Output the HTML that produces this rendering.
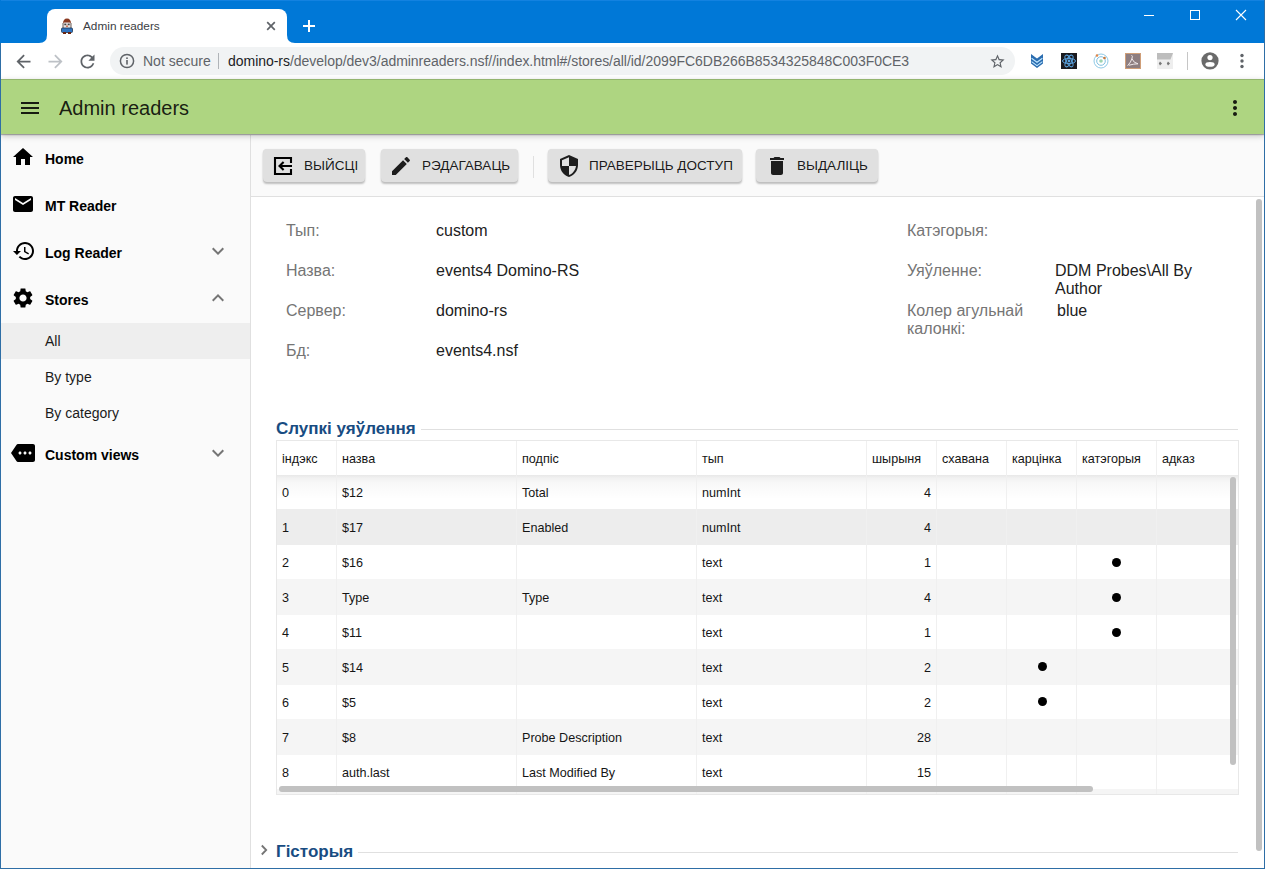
<!DOCTYPE html>
<html><head><meta charset="utf-8">
<style>
*{box-sizing:border-box;margin:0;padding:0}
html,body{width:1265px;height:869px;overflow:hidden;background:#fff;font-family:"Liberation Sans",sans-serif}
.a{position:absolute}
svg{display:block}
/* chrome */
#titlebar{left:0;top:0;width:1265px;height:43px;background:#0078d7}
#tab{left:47px;top:9px;width:240px;height:34px;background:#fff;border-radius:8px 8px 0 0}
#toolbar{left:1px;top:43px;width:1263px;height:36px;background:#fff}
#omni{left:110px;top:47px;width:905px;height:28px;background:#f1f3f4;border-radius:14px}
#appbar{left:1px;top:79px;width:1263px;height:55px;background:#aed581;box-shadow:0 1px 1px rgba(0,0,0,.28),0 2px 6px rgba(0,0,0,.22);z-index:3}
#sidebar{left:1px;top:135px;width:250px;height:734px;background:#fafafa;border-right:1px solid #e0e0e0}
#actbar{left:251px;top:135px;width:1013px;height:62px;background:#fafafa;border-bottom:1px solid #e0e0e0}
#content{left:251px;top:197px;width:1013px;height:672px;background:#fff}
.btn{position:absolute;top:149px;height:33px;background:#e0e0e0;border-radius:4px;box-shadow:0 2px 2px rgba(0,0,0,.24),0 0 1px rgba(0,0,0,.12);font-size:13.5px;color:rgba(0,0,0,.9);white-space:nowrap}
.btn svg{position:absolute;top:5px}
.btn span{position:absolute;top:9px;line-height:16px}
.nav{position:absolute;left:45px;font-size:14px;font-weight:bold;color:#000;white-space:nowrap}
.sub{position:absolute;left:45px;font-size:14px;color:#1a1a1a;white-space:nowrap}
.lbl{position:absolute;font-size:16px;color:#757575;white-space:nowrap;line-height:18px}
.val{position:absolute;font-size:16px;color:#212121;white-space:nowrap;line-height:18px}
.sect{position:absolute;font-size:17px;font-weight:bold;color:#184c82;white-space:nowrap}
.td{position:absolute;font-size:12.6px;color:#151515;white-space:nowrap;line-height:15px}
</style></head>
<body>
<div id="titlebar" class="a"></div>
<div id="tab" class="a"></div>
<div id="toolbar" class="a"></div>
<div id="omni" class="a"></div>
<div id="appbar" class="a"></div>
<div class="a" style="left:1px;top:79px;width:1263px;height:1px;background:rgba(60,70,50,.22);z-index:4"></div>
<div id="sidebar" class="a"></div>
<div id="actbar" class="a"></div>
<div id="content" class="a"></div>


<!-- tab details -->
<svg class="a" style="left:39px;top:35px;z-index:2" width="8" height="8"><path d="M0 8 Q8 8 8 0 V8 Z" fill="#fff"/></svg>
<svg class="a" style="left:287px;top:35px;z-index:2" width="8" height="8"><path d="M0 0 Q0 8 8 8 H0 Z" fill="#fff"/></svg>
<svg class="a" style="left:61px;top:18px;z-index:2" width="12" height="16" viewBox="0 0 12 16">
 <path d="M2 6 Q2 0.5 6 0.5 Q10 0.5 10 6 Z" fill="#8a3a22"/>
 <path d="M1.5 5 h9 v5 h-9z" fill="#6b5a55"/>
 <rect x="2.5" y="4.5" width="7" height="6" rx="1" fill="#e9e4e4"/>
 <rect x="3.3" y="5.6" width="2" height="1.6" fill="#444"/><rect x="6.7" y="5.6" width="2" height="1.6" fill="#444"/>
 <path d="M5.2 7.5 h1.6 v1.6 h-1.6z" fill="#c8603a"/>
 <rect x="0.5" y="10" width="11" height="4.5" rx="1" fill="#2f74c0" stroke="#1d3550" stroke-width="0.8"/>
 <rect x="2" y="14" width="3" height="2" fill="#6a2410"/><rect x="7" y="14" width="3" height="2" fill="#6a2410"/>
</svg>
<div class="a" style="left:83px;top:19px;font-size:11.8px;color:#3c4043;white-space:nowrap;line-height:14px;z-index:2">Admin readers</div>
<svg class="a" style="left:266px;top:21px;z-index:2" width="10" height="10" viewBox="0 0 10 10"><path d="M1.2 1.2 L8.8 8.8 M8.8 1.2 L1.2 8.8" stroke="#5f6368" stroke-width="1.7"/></svg>
<svg class="a" style="left:302px;top:19px;z-index:2" width="14" height="14" viewBox="0 0 14 14"><path d="M7 1 V13 M1 7 H13" stroke="#fff" stroke-width="2"/></svg>
<!-- window controls -->
<div class="a" style="left:1144px;top:15px;width:10px;height:1px;background:#fff"></div>
<div class="a" style="left:1190px;top:10px;width:10px;height:10px;border:1px solid #fff"></div>
<svg class="a" style="left:1235px;top:9px" width="12" height="12" viewBox="0 0 12 12"><path d="M1 1 L11 11 M11 1 L1 11" stroke="#fff" stroke-width="1.1"/></svg>
<div class="a" style="left:1px;top:0;width:1263px;height:1px;background:#1382e0"></div>
<!-- nav buttons -->
<svg class="a" style="left:12.5px;top:50.5px" width="21" height="21" viewBox="0 0 24 24"><path d="M20 11H7.83l5.59-5.59L12 4l-8 8 8 8 1.41-1.41L7.83 13H20v-2z" fill="#5f6368"/></svg>
<svg class="a" style="left:44.5px;top:50.5px" width="21" height="21" viewBox="0 0 24 24"><path d="M12 4l-1.41 1.41L16.17 11H4v2h12.17l-5.58 5.59L12 20l8-8z" fill="#bdc1c6"/></svg>
<svg class="a" style="left:76.5px;top:50.5px" width="21" height="21" viewBox="0 0 24 24"><path d="M17.65 6.35C16.2 4.9 14.21 4 12 4c-4.42 0-7.99 3.58-7.99 8s3.57 8 7.99 8c3.73 0 6.84-2.55 7.73-6h-2.08c-.82 2.33-3.04 4-5.65 4-3.31 0-6-2.69-6-6s2.69-6 6-6c1.66 0 3.14.69 4.22 1.78L13 11h7V4l-2.35 2.35z" fill="#5f6368"/></svg>
<svg class="a" style="left:119px;top:53px" width="16" height="16" viewBox="0 0 16 16"><circle cx="8" cy="8" r="6.6" fill="none" stroke="#5f6368" stroke-width="1.5"/><rect x="7.2" y="7" width="1.6" height="4.6" fill="#5f6368"/><rect x="7.2" y="4.4" width="1.6" height="1.6" fill="#5f6368"/></svg>
<div class="a" style="left:143px;top:53px;font-size:14px;color:#5f6368;white-space:nowrap;line-height:16px">Not secure</div>
<div class="a" style="left:218px;top:53px;width:1px;height:16px;background:#b0b4b8"></div>
<div class="a" style="left:228px;top:53px;font-size:14px;color:#5f6368;white-space:nowrap;line-height:16px;letter-spacing:-0.03px"><span style="color:#202124">domino-rs</span>/develop/dev3/adminreaders.nsf//index.html#/stores/all/id/2099FC6DB266B8534325848C003F0CE3</div>
<svg class="a" style="left:988.5px;top:52.5px" width="17" height="17" viewBox="0 0 24 24"><path d="M22 9.24l-7.19-.62L12 2 9.19 8.63 2 9.24l5.46 4.73L5.82 21 12 17.27 18.18 21l-1.63-7.03L22 9.24zM12 15.4l-3.76 2.27 1-4.28-3.32-2.88 4.38-.38L12 6.1l1.71 4.04 4.38.38-3.32 2.88 1 4.28L12 15.4z" fill="#5f6368"/></svg>
<!-- extensions -->
<svg class="a" style="left:1031px;top:54px" width="12" height="14" viewBox="0 0 12 14"><path d="M0 0 L6 4.6 L12 0 V9.6 L6 14 L0 9.6Z" fill="#2b6db0"/><path d="M0.6 4.2 L6 8.2 L11.4 4.2 M0.6 7.6 L6 11.6 L11.4 7.6" fill="none" stroke="#bfe6ff" stroke-width="1.1"/></svg>
<svg class="a" style="left:1061px;top:53px" width="16" height="16" viewBox="0 0 16 16"><rect width="16" height="16" fill="#1b1b1f"/><g fill="none" stroke="#5ba3e0" stroke-width="1"><ellipse cx="8" cy="8" rx="6.5" ry="2.6"/><ellipse cx="8" cy="8" rx="6.5" ry="2.6" transform="rotate(60 8 8)"/><ellipse cx="8" cy="8" rx="6.5" ry="2.6" transform="rotate(-60 8 8)"/></g><circle cx="8" cy="8" r="1.4" fill="#5ba3e0"/></svg>
<svg class="a" style="left:1093px;top:53px" width="16" height="16" viewBox="0 0 16 16"><circle cx="8" cy="8" r="7" fill="none" stroke="#8ec9e6" stroke-width="1"/><circle cx="8" cy="8" r="4.3" fill="none" stroke="#7fc0e0" stroke-width="1"/><circle cx="8" cy="8" r="1.8" fill="#9fd4b0"/><circle cx="4" cy="2.5" r="1.3" fill="#e0864a"/><circle cx="11.5" cy="5" r="1.3" fill="#c9783a"/></svg>
<svg class="a" style="left:1125px;top:53px" width="16" height="16" viewBox="0 0 16 16"><rect x="0.5" y="0.5" width="15" height="15" fill="#8e7e80" stroke="#cf9e78"/><path d="M6.5 2.2 Q8 2.6 7 5.5 Q6 9 2.6 12.8 M6.8 5.5 Q8.5 10 13 10.8 Q9 10.8 4 12.2" fill="none" stroke="#efe8ea" stroke-width="1"/></svg>
<svg class="a" style="left:1157px;top:53px" width="16" height="16" viewBox="0 0 16 16"><rect x="0" y="0" width="16" height="16" fill="#eeeeee"/><path d="M0 0 H16 L13.5 6.5 H0Z" fill="#bdbdbd"/><path d="M3 8.5 L5 10.5 L3 12.5 L1.8 10.5Z M11 8.5 L13 10.5 L11 12.5 L9.8 10.5Z" fill="#777"/></svg>
<div class="a" style="left:1187px;top:52px;width:1px;height:18px;background:#c6c6c6"></div>
<svg class="a" style="left:1201px;top:52px" width="18" height="18" viewBox="0 0 18 18"><circle cx="9" cy="8.8" r="8.6" fill="#6a6a6a"/><circle cx="9" cy="5.6" r="2.6" fill="#fff"/><ellipse cx="9" cy="12.4" rx="4.6" ry="2.3" fill="#fff"/></svg>
<svg class="a" style="left:1239px;top:53px" width="6" height="16" viewBox="0 0 6 16"><circle cx="3" cy="2.5" r="1.7" fill="#5f6368"/><circle cx="3" cy="8" r="1.7" fill="#5f6368"/><circle cx="3" cy="13.5" r="1.7" fill="#5f6368"/></svg>


<!-- app bar -->
<svg class="a" style="left:18px;top:96px;z-index:4" width="24" height="24" viewBox="0 0 24 24"><path d="M3 18h18v-2H3v2zm0-5h18v-2H3v2zm0-7v2h18V6H3z" fill="rgba(0,0,0,.87)"/></svg>
<div class="a" style="left:59px;top:97px;font-size:20px;color:rgba(0,0,0,.87);white-space:nowrap;line-height:23px;z-index:4">Admin readers</div>
<svg class="a" style="left:1223px;top:96px;z-index:4" width="24" height="24" viewBox="0 0 24 24"><path d="M12 8c1.1 0 2-.9 2-2s-.9-2-2-2-2 .9-2 2 .9 2 2 2zm0 2c-1.1 0-2 .9-2 2s.9 2 2 2 2-.9 2-2-.9-2-2-2zm0 6c-1.1 0-2 .9-2 2s.9 2 2 2 2-.9 2-2-.9-2-2-2z" fill="rgba(0,0,0,.87)"/></svg>
<!-- sidebar -->
<svg class="a" style="left:11px;top:145px" width="24" height="24" viewBox="0 0 24 24"><path d="M10 20v-6h4v6h5v-8h3L12 3 2 12h3v8z" fill="#000"/></svg>
<div class="nav" style="top:151px;line-height:17px">Home</div>
<svg class="a" style="left:11px;top:192px" width="24" height="24" viewBox="0 0 24 24"><path d="M20 4H4c-1.1 0-1.99.9-1.99 2L2 18c0 1.1.9 2 2 2h16c1.1 0 2-.9 2-2V6c0-1.1-.9-2-2-2zm0 4l-8 5-8-5V6l8 5 8-5v2z" fill="#000"/></svg>
<div class="nav" style="top:198px;line-height:17px">MT Reader</div>
<svg class="a" style="left:11.5px;top:239px" width="24" height="24" viewBox="0 0 24 24"><path d="M13 3c-4.97 0-9 4.03-9 9H1l3.89 3.89.07.14L9 12H6c0-3.87 3.13-7 7-7s7 3.13 7 7-3.13 7-7 7c-1.93 0-3.68-.79-4.94-2.06l-1.42 1.42C8.27 19.99 10.51 21 13 21c4.97 0 9-4.03 9-9s-4.03-9-9-9zm-1 5v5l4.28 2.54.72-1.21-3.5-2.08V8H12z" fill="#000"/></svg>
<div class="nav" style="top:245px;line-height:17px">Log Reader</div>
<svg class="a" style="left:206px;top:239px" width="24" height="24" viewBox="0 0 24 24"><path d="M16.59 8.59L12 13.17 7.41 8.59 6 10l6 6 6-6z" fill="#757575"/></svg>
<svg class="a" style="left:11px;top:286px" width="24" height="24" viewBox="0 0 24 24"><path d="M19.14 12.94c.04-.3.06-.61.06-.94 0-.32-.02-.64-.07-.94l2.03-1.58c.18-.14.23-.41.12-.61l-1.92-3.32c-.12-.22-.37-.29-.59-.22l-2.39.96c-.5-.38-1.03-.7-1.62-.94l-.36-2.54c-.04-.24-.24-.41-.48-.41h-3.84c-.24 0-.43.17-.47.41l-.36 2.54c-.59.24-1.13.57-1.62.94l-2.39-.96c-.22-.08-.47 0-.59.22L2.74 8.87c-.12.21-.08.47.12.61l2.03 1.58c-.05.3-.09.63-.09.94s.02.64.07.94l-2.03 1.58c-.18.14-.23.41-.12.61l1.92 3.32c.12.22.37.29.59.22l2.39-.96c.5.38 1.03.7 1.62.94l.36 2.54c.05.24.24.41.48.41h3.84c.24 0 .44-.17.47-.41l.36-2.54c.59-.24 1.13-.56 1.62-.94l2.39.96c.22.08.47 0 .59-.22l1.92-3.32c.12-.22.07-.47-.12-.61l-2.01-1.58zM12 15.6c-1.98 0-3.6-1.62-3.6-3.6s1.62-3.6 3.6-3.6 3.6 1.62 3.6 3.6-1.62 3.6-3.6 3.6z" fill="#000"/></svg>
<div class="nav" style="top:292px;line-height:17px">Stores</div>
<svg class="a" style="left:206px;top:286px" width="24" height="24" viewBox="0 0 24 24"><path d="M12 8l-6 6 1.41 1.41L12 10.83l4.59 4.58L18 14z" fill="#757575"/></svg>
<div class="a" style="left:1px;top:323px;width:249px;height:36px;background:#eeeeee"></div>
<div class="sub" style="top:333px;line-height:17px">All</div>
<div class="sub" style="top:369px;line-height:17px">By type</div>
<div class="sub" style="top:405px;line-height:17px">By category</div>
<svg class="a" style="left:11px;top:441px" width="24" height="24" viewBox="0 0 24 24"><path d="M22 3H7c-.69 0-1.23.35-1.59.88L0 12l5.41 8.11c.36.53.9.89 1.59.89h15c1.1 0 2-.9 2-2V5c0-1.1-.9-2-2-2zM9 13.5c-.83 0-1.5-.67-1.5-1.5s.67-1.5 1.5-1.5 1.5.67 1.5 1.5-.67 1.5-1.5 1.5zm5 0c-.83 0-1.5-.67-1.5-1.5s.67-1.5 1.5-1.5 1.5.67 1.5 1.5-.67 1.5-1.5 1.5zm5 0c-.83 0-1.5-.67-1.5-1.5s.67-1.5 1.5-1.5 1.5.67 1.5 1.5-.67 1.5-1.5 1.5z" fill="#000"/></svg>
<div class="nav" style="top:447px;line-height:17px">Custom views</div>
<svg class="a" style="left:206px;top:441px" width="24" height="24" viewBox="0 0 24 24"><path d="M16.59 8.59L12 13.17 7.41 8.59 6 10l6 6 6-6z" fill="#757575"/></svg>
<!-- action buttons -->
<div class="btn" style="left:263px;width:102px"><svg style="left:8px" width="24" height="24" viewBox="0 0 24 24"><path d="M20 9V4H4V20H20V15 M21 12H8.5 M12.6 7.9L8.5 12L12.6 16.1" fill="none" stroke="#000" stroke-width="2.1"/></svg><span style="left:41px">ВЫЙСЦІ</span></div>
<div class="btn" style="left:381px;width:137px"><svg style="left:8px" width="24" height="24" viewBox="0 0 24 24"><path d="M3 17.25V21h3.75L17.81 9.94l-3.75-3.75L3 17.25zM20.71 7.04c.39-.39.39-1.02 0-1.41l-2.34-2.34c-.39-.39-1.02-.39-1.41 0l-1.83 1.83 3.75 3.75 1.83-1.83z" fill="rgba(0,0,0,.87)"/></svg><span style="left:41px">РЭДАГАВАЦЬ</span></div>
<div class="a" style="left:533px;top:156px;width:1px;height:22px;background:#e0e0e0"></div>
<div class="btn" style="left:548px;width:194px"><svg style="left:9px" width="24" height="24" viewBox="0 0 24 24"><path d="M12 1L3 5v6c0 5.55 3.84 10.74 9 12 5.16-1.26 9-6.45 9-12V5l-9-4zm0 10.99h7c-.53 4.12-3.28 7.79-7 8.94V12H5V6.3l7-3.11v8.8z" fill="rgba(0,0,0,.87)"/></svg><span style="left:41px">ПРАВЕРЫЦЬ ДОСТУП</span></div>
<div class="btn" style="left:756px;width:122px"><svg style="left:9px" width="24" height="24" viewBox="0 0 24 24"><path d="M6 19c0 1.1.9 2 2 2h8c1.1 0 2-.9 2-2V7H6v12zM19 4h-3.5l-1-1h-5l-1 1H5v2h14V4z" fill="rgba(0,0,0,.87)"/></svg><span style="left:41px">ВЫДАЛІЦЬ</span></div>


<!-- details -->
<div class="lbl" style="left:286px;top:222px">Тып:</div><div class="val" style="left:436px;top:222px">custom</div>
<div class="lbl" style="left:286px;top:262px">Назва:</div><div class="val" style="left:436px;top:262px">events4 Domino-RS</div>
<div class="lbl" style="left:286px;top:302px">Сервер:</div><div class="val" style="left:436px;top:302px">domino-rs</div>
<div class="lbl" style="left:286px;top:342px">Бд:</div><div class="val" style="left:436px;top:342px">events4.nsf</div>
<div class="lbl" style="left:907px;top:222px">Катэгорыя:</div>
<div class="lbl" style="left:907px;top:262px">Уяўленне:</div><div class="val" style="left:1055px;top:262px">DDM Probes\All By<br>Author</div>
<div class="lbl" style="left:907px;top:302px">Колер агульнай<br>калонкі:</div><div class="val" style="left:1057px;top:302px">blue</div>
<!-- section -->
<div class="sect" style="left:276px;top:419px;line-height:19px">Слупкі уяўлення</div>
<div class="a" style="left:421px;top:429px;width:817px;height:1px;background:#e0e0e0"></div>

<!-- table -->

<div class="a" style="left:276px;top:440px;width:963px;height:355px;border:1px solid #e8e8e8;background:#fff"></div>
<div class="a" style="left:277px;top:509px;width:961px;height:36px;background:#ededed"></div>
<div class="a" style="left:277px;top:579px;width:961px;height:36px;background:#f5f5f5"></div>
<div class="a" style="left:277px;top:649px;width:961px;height:36px;background:#f5f5f5"></div>
<div class="a" style="left:277px;top:719px;width:961px;height:36px;background:#f5f5f5"></div>
<div class="a" style="left:277px;top:475px;width:961px;height:24px;background:linear-gradient(rgba(0,0,0,.09) 0px,rgba(0,0,0,.055) 3px,rgba(0,0,0,.03) 7px,rgba(0,0,0,.02) 13px,rgba(0,0,0,0) 24px)"></div>
<div class="a" style="left:277px;top:789px;width:961px;height:5px;background:#f5f5f5"></div>
<div class="a" style="left:336px;top:441px;width:1px;height:353px;background:#f0f0f0"></div>
<div class="a" style="left:516px;top:441px;width:1px;height:353px;background:#f0f0f0"></div>
<div class="a" style="left:696px;top:441px;width:1px;height:353px;background:#f0f0f0"></div>
<div class="a" style="left:866px;top:441px;width:1px;height:353px;background:#f0f0f0"></div>
<div class="a" style="left:936px;top:441px;width:1px;height:353px;background:#f0f0f0"></div>
<div class="a" style="left:1006px;top:441px;width:1px;height:353px;background:#f0f0f0"></div>
<div class="a" style="left:1076px;top:441px;width:1px;height:353px;background:#f0f0f0"></div>
<div class="a" style="left:1156px;top:441px;width:1px;height:353px;background:#f0f0f0"></div>
<div class="td" style="left:282px;top:452px">індэкс</div>
<div class="td" style="left:342px;top:452px">назва</div>
<div class="td" style="left:522px;top:452px">подпіс</div>
<div class="td" style="left:702px;top:452px">тып</div>
<div class="td" style="left:872px;top:452px">шырыня</div>
<div class="td" style="left:942px;top:452px">схавана</div>
<div class="td" style="left:1012px;top:452px">карцінка</div>
<div class="td" style="left:1082px;top:452px">катэгорыя</div>
<div class="td" style="left:1162px;top:452px">адказ</div>
<div class="td" style="left:282px;top:486px">0</div>
<div class="td" style="left:342px;top:486px">$12</div>
<div class="td" style="left:522px;top:486px">Total</div>
<div class="td" style="left:702px;top:486px">numInt</div>
<div class="td" style="left:867px;width:64px;top:486px;text-align:right">4</div>
<div class="td" style="left:282px;top:521px">1</div>
<div class="td" style="left:342px;top:521px">$17</div>
<div class="td" style="left:522px;top:521px">Enabled</div>
<div class="td" style="left:702px;top:521px">numInt</div>
<div class="td" style="left:867px;width:64px;top:521px;text-align:right">4</div>
<div class="td" style="left:282px;top:556px">2</div>
<div class="td" style="left:342px;top:556px">$16</div>
<div class="td" style="left:702px;top:556px">text</div>
<div class="td" style="left:867px;width:64px;top:556px;text-align:right">1</div>
<div class="td" style="left:282px;top:591px">3</div>
<div class="td" style="left:342px;top:591px">Type</div>
<div class="td" style="left:522px;top:591px">Type</div>
<div class="td" style="left:702px;top:591px">text</div>
<div class="td" style="left:867px;width:64px;top:591px;text-align:right">4</div>
<div class="td" style="left:282px;top:626px">4</div>
<div class="td" style="left:342px;top:626px">$11</div>
<div class="td" style="left:702px;top:626px">text</div>
<div class="td" style="left:867px;width:64px;top:626px;text-align:right">1</div>
<div class="td" style="left:282px;top:661px">5</div>
<div class="td" style="left:342px;top:661px">$14</div>
<div class="td" style="left:702px;top:661px">text</div>
<div class="td" style="left:867px;width:64px;top:661px;text-align:right">2</div>
<div class="td" style="left:282px;top:696px">6</div>
<div class="td" style="left:342px;top:696px">$5</div>
<div class="td" style="left:702px;top:696px">text</div>
<div class="td" style="left:867px;width:64px;top:696px;text-align:right">2</div>
<div class="td" style="left:282px;top:731px">7</div>
<div class="td" style="left:342px;top:731px">$8</div>
<div class="td" style="left:522px;top:731px">Probe Description</div>
<div class="td" style="left:702px;top:731px">text</div>
<div class="td" style="left:867px;width:64px;top:731px;text-align:right">28</div>
<div class="td" style="left:282px;top:766px">8</div>
<div class="td" style="left:342px;top:766px">auth.last</div>
<div class="td" style="left:522px;top:766px">Last Modified By</div>
<div class="td" style="left:702px;top:766px">text</div>
<div class="td" style="left:867px;width:64px;top:766px;text-align:right">15</div>
<div class="a" style="left:1230px;top:477px;width:6px;height:288px;background:#c1c1c1;border-radius:3px"></div>
<div class="a" style="left:279px;top:786px;width:814px;height:6px;background:#c1c1c1;border-radius:3px"></div>
<svg class="a" style="left:258px;top:842px" width="12" height="16" viewBox="0 0 12 16"><path d="M3.8 3.5 L8.2 8 L3.8 12.5" fill="none" stroke="#757575" stroke-width="1.8"/></svg>
<div class="sect" style="left:276px;top:842px;line-height:19px">Гісторыя</div>
<div class="a" style="left:358px;top:852px;width:880px;height:1px;background:#e0e0e0"></div>
<div class="a" style="left:1256px;top:199px;width:6px;height:652px;background:#c1c1c1;border-radius:3px"></div>
<div class="a" style="left:1112px;top:558px;width:9px;height:9px;border-radius:50%;background:#000"></div>
<div class="a" style="left:1112px;top:593px;width:9px;height:9px;border-radius:50%;background:#000"></div>
<div class="a" style="left:1112px;top:628px;width:9px;height:9px;border-radius:50%;background:#000"></div>
<div class="a" style="left:1037.5px;top:662px;width:9px;height:9px;border-radius:50%;background:#000"></div>
<div class="a" style="left:1037.5px;top:697px;width:9px;height:9px;border-radius:50%;background:#000"></div>
<!-- window borders -->
<div class="a" style="left:0;top:43px;width:1px;height:826px;background:#2e6ea6;z-index:9"></div>
<div class="a" style="left:1264px;top:0;width:1px;height:869px;background:#2e6ea6;z-index:9"></div>
<div class="a" style="left:0;top:868px;width:1265px;height:1px;background:#2e6ea6;z-index:9"></div>
</body></html>
